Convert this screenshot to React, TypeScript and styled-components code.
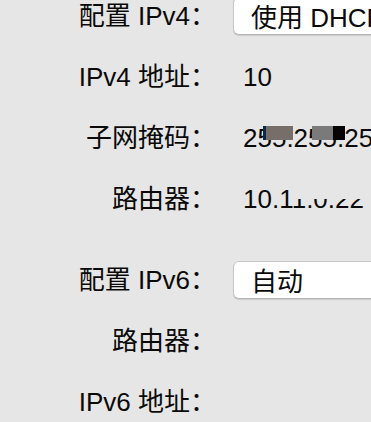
import React from "react";
import styled, { createGlobalStyle } from "styled-components";

const Global = createGlobalStyle`
  html, body {
    margin: 0;
    padding: 0;
    background: #e6e6e6;
  }
  body {
    width: 371px;
    height: 422px;
    overflow: hidden;
    font-family: "Liberation Sans", "Noto Sans CJK SC", sans-serif;
  }
`;

const Panel = styled.div`
  width: 371px;
  height: 422px;
  overflow: hidden;
  display: flex;
  flex-direction: column;
`;

const Group = styled.div<{ $offset: number }>`
  display: flex;
  flex-direction: column;
  margin-top: ${(p) => p.$offset}px;
`;

const Row = styled.div`
  display: grid;
  grid-template-columns: 216px 1fr;
  column-gap: 17px;
  height: 61px;
  align-items: center;
  font-size: 26px;
  color: #0a0a0a;
  white-space: nowrap;
`;

const Label = styled.div`
  text-align: right;
  line-height: 30px;
`;

const Value = styled.div`
  position: relative;
  padding-left: 10px;
  line-height: 30px;
  overflow: hidden;
`;

const Popup = styled.div`
  box-sizing: border-box;
  height: 38px;
  width: 220px;
  padding-left: 17px;
  display: flex;
  align-items: center;
  background: #ffffff;
  border: 1px solid #c9c9c9;
  border-bottom-color: #b5b5b5;
  border-radius: 6px;
  box-shadow: 0 1px 1px rgba(0, 0, 0, 0.12);
  color: #0a0a0a;
  font-size: 26px;
`;

const Redact = styled.span<{ $x: number; $y: number; $w: number; $h: number; $c: string }>`
  position: absolute;
  left: ${(p) => p.$x}px;
  top: ${(p) => p.$y}px;
  width: ${(p) => p.$w}px;
  height: ${(p) => p.$h}px;
  background: ${(p) => p.$c};
`;

export default function App() {
  return (
    <>
      <Global />
      <Panel>
        <Group $offset={-15}>
          <Row>
            <Label>配置 IPv4：</Label>
            <Popup>使用 DHCP</Popup>
          </Row>
          <Row>
            <Label>IPv4 地址：</Label>
            <Value>10</Value>
          </Row>
          <Row>
            <Label>子网掩码：</Label>
            <Value>
              255.255.255.0
              <Redact $x={30} $y={3} $w={4} $h={14} $c="#0b2a48" />
              <Redact $x={33} $y={3} $w={27} $h={14} $c="#776e6a" />
              <Redact $x={79} $y={3} $w={21} $h={14} $c="#7a7a7a" />
              <Redact $x={100} $y={3} $w={12} $h={14} $c="#050505" />
            </Value>
          </Row>
          <Row>
            <Label>路由器：</Label>
            <Value>
              10.11.0.22
              <Redact $x={58} $y={-2} $w={90} $h={17} $c="#e6e6e6" />
            </Value>
          </Row>
        </Group>
        <Group $offset={20}>
          <Row>
            <Label>配置 IPv6：</Label>
            <Popup>自动</Popup>
          </Row>
          <Row>
            <Label>路由器：</Label>
            <Value />
          </Row>
          <Row>
            <Label>IPv6 地址：</Label>
            <Value />
          </Row>
        </Group>
      </Panel>
    </>
  );
}
